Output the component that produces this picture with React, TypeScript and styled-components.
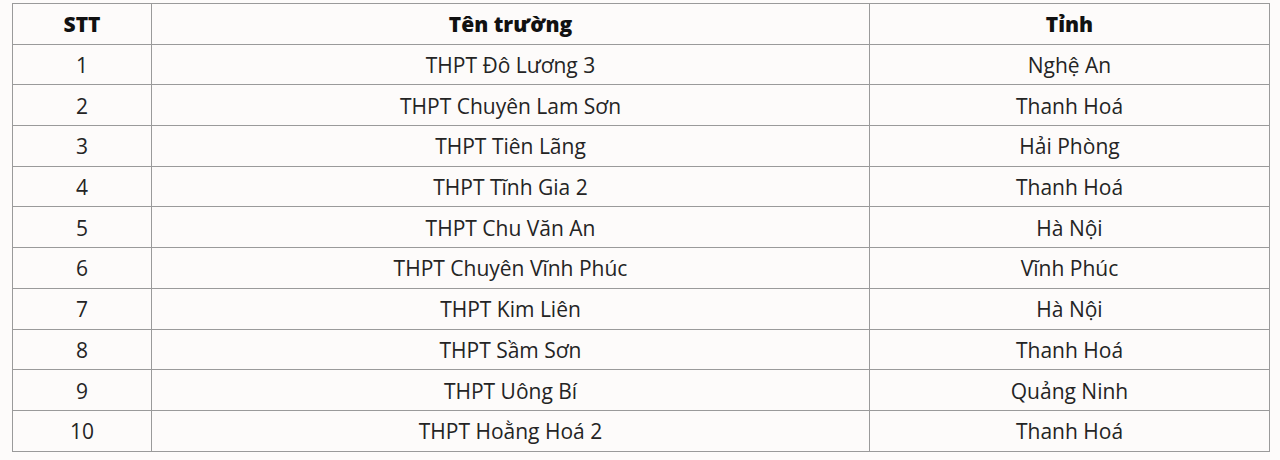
import styled, { createGlobalStyle } from "styled-components";

const GlobalStyle = createGlobalStyle`
	body {
		margin: 0;
		background-color: #fdfbfa;
		font-family: "Open Sans", "Noto Sans", sans-serif;
	}
`;

const rows = [
	["1", "THPT Đô Lương 3", "Nghệ An"],
	["2", "THPT Chuyên Lam Sơn", "Thanh Hoá"],
	["3", "THPT Tiên Lãng", "Hải Phòng"],
	["4", "THPT Tĩnh Gia 2", "Thanh Hoá"],
	["5", "THPT Chu Văn An", "Hà Nội"],
	["6", "THPT Chuyên Vĩnh Phúc", "Vĩnh Phúc"],
	["7", "THPT Kim Liên", "Hà Nội"],
	["8", "THPT Sầm Sơn", "Thanh Hoá"],
	["9", "THPT Uông Bí", "Quảng Ninh"],
	["10", "THPT Hoằng Hoá 2", "Thanh Hoá"],
];

export default function App() {
	return (
		<Page>
			<GlobalStyle />
			<Table>
				<colgroup>
					<col style={{ width: 139 }} />
					<col style={{ width: 718 }} />
					<col style={{ width: 400 }} />
				</colgroup>
				<thead>
					<tr>
						<Head>STT</Head>
						<Head>Tên trường</Head>
						<Head>Tỉnh</Head>
					</tr>
				</thead>
				<tbody>
					{rows.map((r) => (
						<tr key={r[0]}>
							<Cell>{r[0]}</Cell>
							<Cell>{r[1]}</Cell>
							<Cell>{r[2]}</Cell>
						</tr>
					))}
				</tbody>
			</Table>
		</Page>
	);
}

const Page = styled.div`
	padding: 3px 0 0 12px;
`;

const Table = styled.table`
	width: 1257px;
	border-collapse: collapse;
	table-layout: fixed;
`;

const Head = styled.th`
	height: 38.7px;
	padding: 1px 0 0;
	border: 1.5px solid #9a9a9a;
	font-size: 21px;
	font-weight: 800;
	color: #111;
	text-align: center;
`;

const Cell = styled.td`
	height: 38.7px;
	padding: 1px 0 0;
	border: 1.5px solid #9a9a9a;
	font-size: 21px;
	color: #242424;
	text-align: center;
`;
